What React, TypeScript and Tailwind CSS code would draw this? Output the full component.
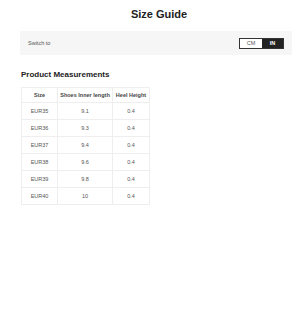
const rows = [
  ["EUR35", "9.1", "0.4"],
  ["EUR36", "9.3", "0.4"],
  ["EUR37", "9.4", "0.4"],
  ["EUR38", "9.6", "0.4"],
  ["EUR39", "9.8", "0.4"],
  ["EUR40", "10", "0.4"],
];

export default function App() {
  return (
    <div className="w-[300px] h-[312px] bg-white pl-[20px] pr-[8px] pt-[6px] font-['Liberation_Sans',Arial,sans-serif] text-[#333]">
      <div className="text-center text-[11px] font-bold text-[#222] leading-[16px] pl-[6px]">Size Guide</div>

      {/* unit switch */}
      <div className="mt-[9px] h-[24px] bg-[#f6f6f6] flex items-center justify-between pl-[8px] pr-[8px]">
        <span className="text-[5.5px] text-[#555]">Switch to</span>
        <div className="flex h-[11px] border border-[#333] text-[5.5px]">
          <div className="w-[22px] flex items-center justify-center bg-white text-[#555]">CM</div>
          <div className="w-[21px] flex items-center justify-center bg-[#222] text-white font-bold">IN</div>
        </div>
      </div>

      <div className="mt-[14px] text-[8px] font-bold text-[#222] leading-[12px] pl-[1px]">Product Measurements</div>

      <table className="mt-[6px] ml-[1px] border-collapse text-[5.5px] text-[#555]">
        <thead>
          <tr className="h-[15px]">
            <th className="w-[36px] border border-[#eee] font-semibold text-[#444]">Size</th>
            <th className="w-[55px] border border-[#eee] font-semibold text-[#444]">Shoes Inner length</th>
            <th className="w-[37px] border border-[#eee] font-semibold text-[#444]">Heel Height</th>
          </tr>
        </thead>
        <tbody>
          {rows.map((r) => (
            <tr key={r[0]} className="h-[17px]">
              {r.map((c, i) => (
                <td key={i} className="border border-[#eee] text-center">{c}</td>
              ))}
            </tr>
          ))}
        </tbody>
      </table>
    </div>
  );
}
